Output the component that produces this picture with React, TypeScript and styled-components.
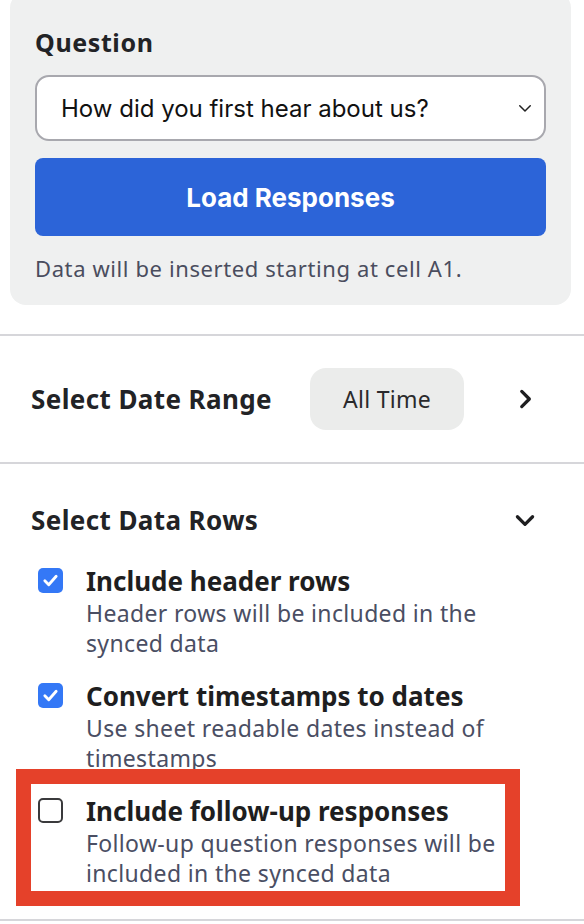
import React from 'react';
import styled, { createGlobalStyle } from 'styled-components';

const GlobalStyle = createGlobalStyle`
  html, body {
    margin: 0;
    padding: 0;
    background: #fff;
    overflow: hidden;
  }
  body {
    font-family: "Noto Sans", Lato, sans-serif;
    color: #1e1e20;
  }
`;

const Page = styled.div`
  width: 584px;
  display: flex;
  flex-direction: column;
`;

const Card = styled.div`
  margin: -8px 13px 0 10px;
  padding: 35px 25px 25px;
  background: #eff0f0;
  border-radius: 16px;
  display: flex;
  flex-direction: column;
`;

const CardTitle = styled.div`
  font-size: 25px;
  line-height: 30px;
  font-weight: 700;
  letter-spacing: 0.6px;
  color: #222326;
`;

const SelectBox = styled.div`
  margin-top: 18px;
  height: 66px;
  box-sizing: border-box;
  border: 2px solid #a8a8ae;
  border-radius: 14px;
  background: #fff;
  display: flex;
  align-items: center;
  padding: 0 10px 0 24px;
  font-family: Inter, "Noto Sans", sans-serif;
  font-size: 24px;
  color: #111;
`;

const SelectText = styled.span`
  flex: 1;
`;

const LoadButton = styled.button`
  margin-top: 17px;
  height: 78px;
  border: none;
  border-radius: 8px;
  background: #2c64d8;
  color: #fff;
  font-family: Inter, "Noto Sans", sans-serif;
  font-size: 26px;
  font-weight: 700;
`;

const Hint = styled.div`
  margin-top: 20px;
  font-size: 22px;
  line-height: 24px;
  letter-spacing: 0.6px;
  color: #4a4d5e;
`;

const Divider = styled.div`
  height: 2px;
  background: #d6d6da;
  margin-top: ${(p: { $top: number }) => p.$top}px;
`;

const RangeRow = styled.div`
  display: grid;
  grid-template-columns: 279px 154px 1fr;
  align-items: center;
  padding: 32px 46px 32px 31px;
`;

const SectionTitle = styled.div`
  font-size: 26px;
  line-height: 34px;
  font-weight: 700;
  letter-spacing: 0.4px;
  color: #222326;
`;

const Pill = styled.div`
  height: 62px;
  border-radius: 16px;
  background: #ebeceb;
  display: flex;
  align-items: center;
  justify-content: center;
  font-size: 23px;
  letter-spacing: 0.3px;
  color: #2a2a2c;
`;

const IconSlot = styled.div`
  justify-self: end;
  display: flex;
`;

const RowsHeader = styled.div`
  display: flex;
  align-items: center;
  justify-content: space-between;
  padding: 39px 46px 0 31px;
`;

const List = styled.div`
  display: flex;
  flex-direction: column;
  gap: 21px;
  padding: 27px 0 0 38px;
`;

const Item = styled.div<{ $highlight?: boolean }>`
  display: flex;
  align-items: flex-start;
  gap: 23px;
  width: ${(p) => (p.$highlight ? '467px' : 'auto')};
  ${(p) =>
    p.$highlight &&
    `
    margin: -10px 0 0 -7px;
    padding: 10px 0 3px 7px;
    outline: 15px solid #e5412a;
    background: #fff;
  `}
`;

const Box = styled.div<{ $checked: boolean }>`
  flex: none;
  width: 25px;
  height: 25px;
  margin-top: 4px;
  box-sizing: border-box;
  border-radius: 5px;
  display: flex;
  align-items: center;
  justify-content: center;
  background: ${(p) => (p.$checked ? '#3478f6' : '#fff')};
  border: ${(p) => (p.$checked ? 'none' : '2px solid #3a3a3c')};
`;

const ItemText = styled.div`
  width: 420px;
`;

const ItemTitle = styled.div`
  font-size: 26px;
  line-height: 34px;
  font-weight: 700;
  color: #1e1e20;
`;

const ItemDesc = styled.div`
  font-size: 23px;
  line-height: 30px;
  letter-spacing: 0.35px;
  color: #4a4e63;
`;

const Check = () => (
  <svg width="17" height="17" viewBox="0 0 24 24" fill="none" stroke="#fff" strokeWidth="4" strokeLinecap="round" strokeLinejoin="round">
    <path d="M4 12.5l5.5 5.5L20 6" />
  </svg>
);

const Chevron = ({ dir, size, stroke }: { dir: 'right' | 'down'; size: number; stroke: number }) => (
  <svg width={size} height={size} viewBox="0 0 24 24" fill="none" stroke="#1e1e20" strokeWidth={stroke} strokeLinecap="round" strokeLinejoin="round">
    {dir === 'right' ? <path d="M9 5l7 7-7 7" /> : <path d="M5 9l7 7 7-7" />}
  </svg>
);

const options = [
  { title: 'Include header rows', desc: 'Header rows will be included in the synced data', checked: true },
  { title: 'Convert timestamps to dates', desc: 'Use sheet readable dates instead of timestamps', checked: true },
  { title: 'Include follow-up responses', desc: 'Follow-up question responses will be included in the synced data', checked: false, highlight: true },
];

export default function App() {
  return (
    <Page>
      <GlobalStyle />
      <Card>
        <CardTitle>Question</CardTitle>
        <SelectBox>
          <SelectText>How did you first hear about us?</SelectText>
          <svg width="18" height="18" viewBox="0 0 24 24" fill="none" stroke="#222" strokeWidth="2" strokeLinecap="round" strokeLinejoin="round">
            <path d="M5 9l7 7 7-7" />
          </svg>
        </SelectBox>
        <LoadButton>Load Responses</LoadButton>
        <Hint>Data will be inserted starting at cell A1.</Hint>
      </Card>

      <Divider $top={29} />
      <RangeRow>
        <SectionTitle>Select Date Range</SectionTitle>
        <Pill>All Time</Pill>
        <IconSlot>
          <Chevron dir="right" size={26} stroke={3} />
        </IconSlot>
      </RangeRow>
      <Divider $top={0} />

      <RowsHeader>
        <SectionTitle>Select Data Rows</SectionTitle>
        <Chevron dir="down" size={26} stroke={3} />
      </RowsHeader>
      <List>
        {options.map((o) => (
          <Item key={o.title} $highlight={o.highlight}>
            <Box $checked={o.checked}>{o.checked && <Check />}</Box>
            <ItemText>
              <ItemTitle>{o.title}</ItemTitle>
              <ItemDesc>{o.desc}</ItemDesc>
            </ItemText>
          </Item>
        ))}
      </List>
      <Divider $top={28} />
    </Page>
  );
}
